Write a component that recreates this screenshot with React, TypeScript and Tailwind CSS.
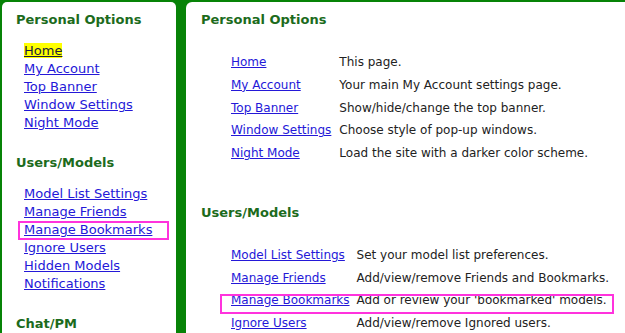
import React from "react";

const font = { fontFamily: '"DejaVu Sans", Verdana, sans-serif' };

const leftPersonal = ["Home", "My Account", "Top Banner", "Window Settings", "Night Mode"];
const leftUsers = ["Model List Settings", "Manage Friends", "Manage Bookmarks", "Ignore Users", "Hidden Models", "Notifications"];

const rightPersonal: [string, string][] = [
  ["Home", "This page."],
  ["My Account", "Your main My Account settings page."],
  ["Top Banner", "Show/hide/change the top banner."],
  ["Window Settings", "Choose style of pop-up windows."],
  ["Night Mode", "Load the site with a darker color scheme."],
];
const rightUsers: [string, string][] = [
  ["Model List Settings", "Set your model list preferences."],
  ["Manage Friends", "Add/view/remove Friends and Bookmarks."],
  ["Manage Bookmarks", "Add or review your 'bookmarked' models."],
  ["Ignore Users", "Add/view/remove Ignored users."],
];

function Heading({ children, className = "" }: { children: React.ReactNode; className?: string }) {
  return <div className={`text-[13px] leading-[18px] font-bold text-[#1c6b1c] whitespace-nowrap ${className}`}>{children}</div>;
}

export default function App() {
  return (
    <div className="w-[625px] h-[333px] overflow-hidden bg-[#078307] pt-[2px] flex text-[13px]" style={font}>
      <div className="w-[174px] ml-[2px] bg-white rounded-t-[5px] pt-[9px] pl-[14px] shrink-0">
        <Heading>Personal Options</Heading>
        <div className="mt-[13px] pl-[8px] flex flex-col">
          {leftPersonal.map((l, i) => (
            <div key={l} className="h-[18px] leading-[18px] whitespace-nowrap">
              <a className={`underline ${i === 0 ? "bg-[#ffff00] text-[#1a1a40]" : "text-[#2418d8]"}`}>{l}</a>
            </div>
          ))}
        </div>
        <Heading className="mt-[22px]">Users/Models</Heading>
        <div className="mt-[13px] pl-[8px] flex flex-col">
          {leftUsers.map((l) => (
            <div key={l} className="h-[18px] leading-[18px] relative whitespace-nowrap">
              <a className="underline text-[#2418d8]">{l}</a>
              {l === "Manage Bookmarks" && (
                <div className="absolute left-[-6px] top-[0px] w-[151px] h-[19px] border-2 border-[#ff33dd]" />
              )}
            </div>
          ))}
        </div>
        <Heading className="mt-[22px]">Chat/PM</Heading>
      </div>
      <div className="flex-1 ml-[10px] bg-white rounded-tl-[6px] pt-[9px] pl-[15px]">
        <Heading>Personal Options</Heading>
        <div className="mt-[22px] pl-[30px] grid grid-cols-[auto_1fr] gap-x-[8px] text-[12px] text-[#222]">
          {rightPersonal.map(([l, d]) => (
            <React.Fragment key={l}>
              <div className="h-[22.75px] leading-[22.75px] whitespace-nowrap"><a className="underline text-[#2418d8]">{l}</a></div>
              <div className="h-[22.75px] leading-[22.75px] whitespace-nowrap">{d}</div>
            </React.Fragment>
          ))}
        </div>
        <Heading className="mt-[39px]">Users/Models</Heading>
        <div className="mt-[22px] pl-[30px] grid grid-cols-[auto_1fr] gap-x-[7px] text-[12px] text-[#222]">
          {rightUsers.map(([l, d]) => (
            <React.Fragment key={l}>
              <div className="h-[22.75px] leading-[22.75px] relative whitespace-nowrap">
                <a className="underline text-[#2418d8]">{l}</a>
                {l === "Manage Bookmarks" && (
                  <div className="absolute left-[-11px] top-[5px] w-[394px] h-[20px] border-2 border-[#ff33dd]" />
                )}
              </div>
              <div className="h-[22.75px] leading-[22.75px] whitespace-nowrap">{d}</div>
            </React.Fragment>
          ))}
        </div>
      </div>
    </div>
  );
}
